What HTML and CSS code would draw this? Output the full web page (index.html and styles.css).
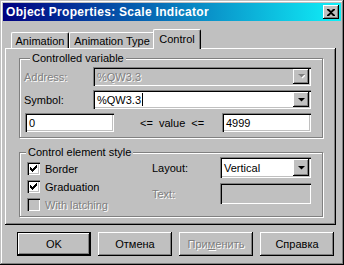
FILE: index.html
```html
<!DOCTYPE html>
<html lang="en">
<head>
    <meta charset="UTF-8">
    <title>Object Properties: Scale Indicator</title>
    <link rel="stylesheet" href="styles.css">
</head>
<body>
    <div class="window">
        <!-- Title bar -->
        <div class="titlebar">
            <span class="title">Object Properties: Scale Indicator</span>
            <span class="close">
                <svg width="8" height="7" viewBox="0 0 8 7"><path d="M0 0h2l2 2 2-2h2v1L5 3.5 8 6v1H6L4 5 2 7H0V6l3-2.5L0 1z" fill="#000"/></svg>
            </span>
        </div>

        <!-- Tabs -->
        <div class="tabs">
            <div class="tab tab-anim">Animation</div>
            <div class="tab tab-type">Animation Type</div>
            <div class="tab tab-control active">Control</div>
        </div>

        <div class="panel">
            <div class="group group-var">
                <div class="legend">Controlled variable</div>
                <div class="row">
                    <span class="label disabled">Address:</span>
                    <div class="combo combo-wide off">
                        <span class="combo-text disabled">%QW3.3</span>
                        <span class="drop"><svg width="7" height="5" viewBox="0 0 7 5"><path d="M1 1h7L4.5 4.5z" fill="#fff"/><path d="M0 0h7L3.5 3.5z" fill="#808080"/></svg></span>
                    </div>
                </div>
                <div class="row">
                    <span class="label">Symbol:</span>
                    <div class="combo combo-wide">
                        <span class="combo-text">%QW3.3<span class="caret"></span></span>
                        <span class="drop"><svg width="7" height="4" viewBox="0 0 7 4"><path d="M0 0h7L3.5 3.5z" fill="#000"/></svg></span>
                    </div>
                </div>
                <div class="row range">
                    <div class="field num">0</div>
                    <span class="range-text">&lt;= &nbsp;value &nbsp;&lt;=</span>
                    <div class="field num max">4999</div>
                </div>
            </div>

            <div class="group group-style">
                <div class="legend">Control element style</div>
                <div class="style-cols">
                    <div class="checks">
                        <div class="check">
                            <span class="box"><svg width="7" height="7" viewBox="0 0 7 7"><path d="M6 0h1v3H6v1H5v1H4v1H3v1H2V6H1V5H0V2h1v1h1v1h1V3h1V2h1V1h1z" fill="#000"/></svg></span>
                            <span>Border</span>
                        </div>
                        <div class="check">
                            <span class="box"><svg width="7" height="7" viewBox="0 0 7 7"><path d="M6 0h1v3H6v1H5v1H4v1H3v1H2V6H1V5H0V2h1v1h1v1h1V3h1V2h1V1h1z" fill="#000"/></svg></span>
                            <span>Graduation</span>
                        </div>
                        <div class="check">
                            <span class="box off"></span>
                            <span class="disabled">With latching</span>
                        </div>
                    </div>
                    <div class="style-right">
                        <div class="row">
                            <span class="label short">Layout:</span>
                            <div class="combo combo-small">
                                <span class="combo-text">Vertical</span>
                                <span class="drop"><svg width="7" height="4" viewBox="0 0 7 4"><path d="M0 0h7L3.5 3.5z" fill="#000"/></svg></span>
                            </div>
                        </div>
                        <div class="row">
                            <span class="label short disabled">Text:</span>
                            <div class="field text-field off"></div>
                        </div>
                    </div>
                </div>
            </div>
        </div>

        <!-- Dialog buttons -->
        <div class="buttons">
            <div class="btn default">OK</div>
            <div class="btn">Отмена</div>
            <div class="btn"><span class="disabled">При<u>м</u>енить</span></div>
            <div class="btn">Справка</div>
        </div>
    </div>
</body>
</html>
```

FILE: styles.css
```css
/* Win95 style dialog */
body { margin: 0; background: #c0c0c0; font: 11px "Liberation Sans", Arial, sans-serif; color: #000; }

.window { width: 344px; height: 265px; box-sizing: border-box; padding: 3px; background: #c0c0c0;
    box-shadow: inset -1px -1px #000, inset 1px 1px #c0c0c0, inset -2px -2px #808080, inset 2px 2px #fff; }

.titlebar { height: 18px; display: flex; align-items: center; justify-content: space-between; padding: 0 2px 0 3px;
    background: linear-gradient(90deg, #000080, #10f0f8); }
.title { color: #fff; font-weight: bold; font-size: 12px; letter-spacing: 0.3px; }
.close { width: 16px; height: 14px; display: flex; align-items: center; justify-content: center; background: #c0c0c0;
    box-shadow: inset -1px -1px #000, inset 1px 1px #fff, inset -2px -2px #808080; }

.tabs { display: flex; align-items: flex-start; height: 19px; margin-top: 8px; padding-left: 8px; }
.tab { height: 16px; margin-top: 3px; box-sizing: border-box; display: flex; align-items: center; justify-content: center;
    border-top: 1px solid #fff; border-left: 1px solid #fff; border-right: 1px solid #000; border-radius: 2px 2px 0 0;
    box-shadow: inset -1px 0 #808080; background: #c0c0c0; padding-top: 1px; }
.tab-anim { width: 58px; }
.tab-type { width: 86px; }
.tab-control { width: 44px; }
.tab.active { height: 20px; width: 48px; margin: 0 -2px -1px; position: relative; z-index: 1; padding-bottom: 2px; }

.panel { width: 331px; height: 177px; margin-left: 2px; box-sizing: border-box; padding: 10px 0 0 14px;
    box-shadow: inset -1px -1px #000, inset 1px 1px #fff, inset -2px -2px #808080; }

.group { width: 304px; box-sizing: border-box; border: 1px solid #808080; box-shadow: inset 1px 1px #fff, 1px 1px #fff; }
.group-var { height: 80px; padding: 0 11px 0 4px; }
.group-style { height: 65px; margin-top: 14px; }
.legend { width: fit-content; height: 13px; line-height: 13px; margin: -7px 0 -6px 6px; padding: 0 2px; background: #c0c0c0; }

.row { display: flex; align-items: center; }
.group-var .row:nth-child(2) { margin-top: 8px; }
.group-var .row + .row { margin-top: 4px; }
.group-var .range { margin-top: 5px; }
.label { width: 69px; }
.label.short { width: 68px; }

.disabled { color: #808080; text-shadow: 1px 1px #fff; }

.combo, .field { box-sizing: border-box; background: #fff;
    box-shadow: inset 1px 1px #808080, inset 2px 2px #000, inset -1px -1px #fff, inset -2px -2px #c0c0c0; }
.combo { display: flex; align-items: center; height: 19px; padding: 2px; }
.combo.off, .field.off { background: #c0c0c0; }
.combo-wide { width: 218px; }
.combo-small { width: 91px; height: 21px; }
.combo-text { flex: 1; padding-left: 2px; display: flex; align-items: center; }
.caret { width: 1px; height: 13px; background: #000; margin-left: 1px; }
.drop { width: 16px; height: 100%; display: flex; align-items: center; justify-content: center; background: #c0c0c0;
    box-shadow: inset -1px -1px #000, inset 1px 1px #fff, inset -2px -2px #808080; }

.field { height: 19px; display: flex; align-items: center; padding-left: 4px; }
.num { width: 89px; }
.range .num:first-child { margin-left: 1px; }
.range-text { margin-left: 26px; }
.range .max { margin-left: auto; }
.text-field { width: 91px; height: 21px; }

.style-cols { display: flex; }
.checks { width: 125px; padding: 9px 0 0 7px; }
.check { display: flex; align-items: center; height: 13px; margin-bottom: 5px; }
.box { width: 13px; height: 13px; box-sizing: border-box; margin-right: 5px; background: #fff; display: flex;
    align-items: center; justify-content: center;
    box-shadow: inset 1px 1px #808080, inset 2px 2px #000, inset -1px -1px #fff, inset -2px -2px #c0c0c0; }
.box.off { background: #c0c0c0; }
.style-right { padding-top: 4px; }
.style-right .row + .row { margin-top: 5px; }

.buttons { display: flex; gap: 7px; margin-top: 7px; padding-left: 14px; }
.btn { width: 74px; height: 24px; display: flex; align-items: center; justify-content: center; background: #c0c0c0;
    box-shadow: inset -1px -1px #000, inset 1px 1px #fff, inset -2px -2px #808080; }
.btn.default { box-shadow: inset 0 0 0 1px #000, inset -2px -2px #000, inset 2px 2px #fff, inset -3px -3px #808080; }
```
